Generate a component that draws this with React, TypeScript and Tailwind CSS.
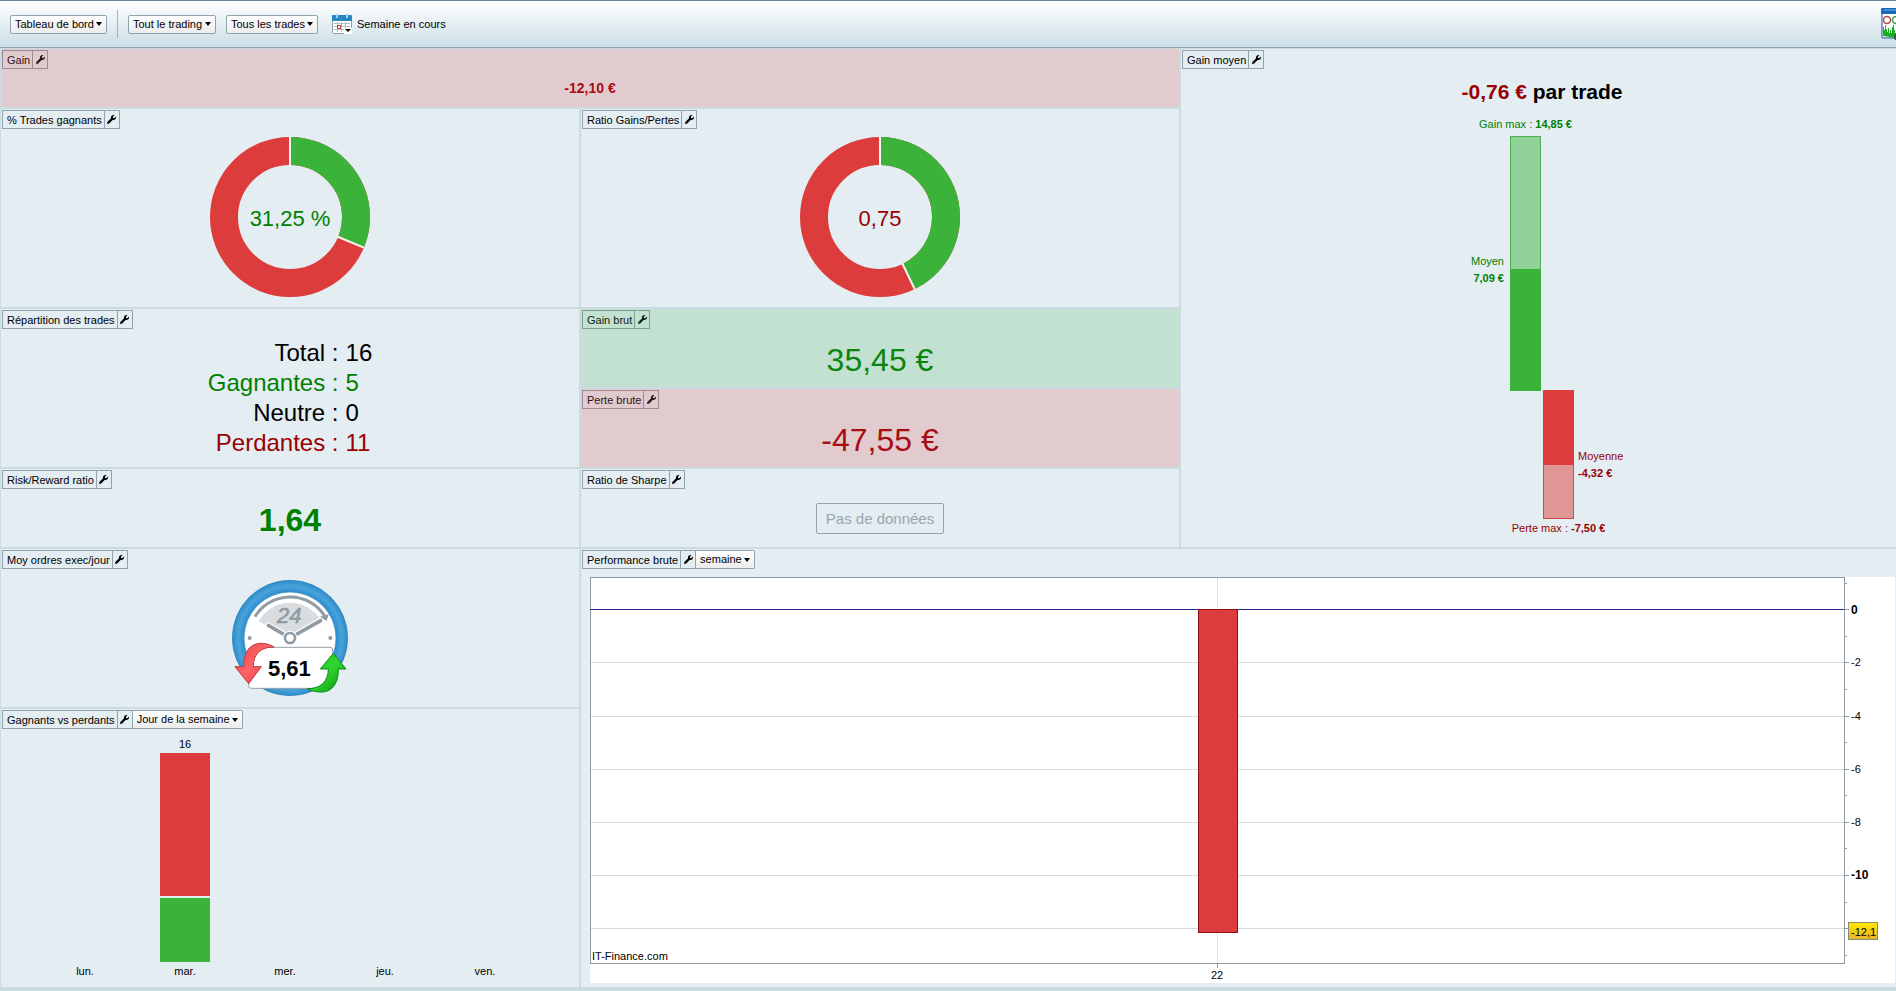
import React, { useState } from 'react';
import { FaWrench } from 'react-icons/fa';

type Tone = 'plain' | 'gain' | 'loss';

const panelTones: Record<Tone, string> = {
  plain: 'bg-[#e3edf2]',
  gain: 'bg-[#c3e1d1]',
  loss: 'bg-[#e1cbce]',
};

const tagTones: Record<Tone, string> = {
  plain: 'border-[#8fa3ad] text-black',
  gain: 'border-[#7f9f90] text-[#0c2414]',
  loss: 'border-[#9c8b92] text-[#2c1418]',
};

const Caret = ({ className = '' }: { className?: string }) => (
  <svg viewBox="0 0 6 4" width="6" height="4" className={className} aria-hidden="true">
    <path d="M0 0h6L3 4z" fill="#000" />
  </svg>
);

const Dropdown = ({ label, options, attached = false }: { label: string; options: string[]; attached?: boolean }) => {
  const [value, setValue] = useState(options[0]);

  return (
    <div
      className={`relative flex h-[19px] items-center border border-[#8fa3ad] bg-gradient-to-b from-white to-[#ececec] ${
        attached ? 'rounded-r-[2px] border-l-0' : 'rounded-[2px]'
      }`}
    >
      <select
        aria-label={label}
        value={value}
        onChange={(e) => setValue(e.target.value)}
        className="h-full appearance-none bg-transparent pl-1 pr-3 text-[11px] leading-[17px] text-black outline-none"
      >
        {options.map((option) => (
          <option key={option}>{option}</option>
        ))}
      </select>
      <Caret className="pointer-events-none absolute right-1" />
    </div>
  );
};

interface PanelProps {
  title: string;
  tone?: Tone;
  className?: string;
  extra?: React.ReactNode;
  children: React.ReactNode;
}

const Panel = ({ title, tone = 'plain', className = '', extra, children }: PanelProps) => (
  <section className={`flex min-w-0 flex-col ${panelTones[tone]} ${className}`}>
    <div className="flex pl-px pt-px">
      <div className={`flex h-[19px] border ${tagTones[tone]}`}>
        <h2 className="whitespace-nowrap pl-1 pr-0.5 text-[11px] leading-[18px]">{title}</h2>
        <button
          type="button"
          aria-label={`Configurer ${title}`}
          className={`flex w-[15px] items-center justify-center border-l ${tagTones[tone]}`}
        >
          <FaWrench className="h-[9px] w-[9px]" />
        </button>
      </div>
      {extra}
    </div>
    <div className="flex flex-1 flex-col justify-center">{children}</div>
  </section>
);

const Figure = ({ className, children }: { className: string; children: React.ReactNode }) => (
  <p className={`pt-[3px] text-center text-[32px] leading-[36px] ${className}`}>{children}</p>
);

const Donut = ({ share, label, color }: { share: number; label: string; color: string }) => {
  const circumference = 2 * Math.PI * 66;
  const angle = share * 360;

  return (
    <svg viewBox="0 0 160 160" className="mx-auto mb-0.5 h-40 w-40" role="img" aria-label={label}>
      <circle cx="80" cy="80" r="66" fill="none" stroke="#dd3c3c" strokeWidth="28" />
      <circle
        cx="80"
        cy="80"
        r="66"
        fill="none"
        stroke="#3bb33b"
        strokeWidth="28"
        strokeDasharray={`${circumference * share} ${circumference}`}
        transform="rotate(-90 80 80)"
      />
      <path d="M80 29V0" stroke="#f7f5f2" strokeWidth="2" />
      <path d="M80 29V0" stroke="#f7f5f2" strokeWidth="2" transform={`rotate(${angle} 80 80)`} />
      <text x="80" y="89" textAnchor="middle" fontSize="22" fill={color}>
        {label}
      </text>
    </svg>
  );
};

const CalendarIcon = () => (
  <svg viewBox="0 0 20 20" width="20" height="20" aria-hidden="true">
    <rect x="0.500" y="3.500" width="19" height="16" rx="1" fill="#fff" stroke="#8fa0aa" />
    <rect x="0" y="1" width="20" height="6" rx="1" fill="#2787c2" />
    <path d="M5 0v4M15 0v4" stroke="#a9d2ea" strokeWidth="2" />
    <path d="M2 9.500h16M2 12.500h16M2 15.500h16M5.500 8v10M9.500 8v10M13.500 8v6" stroke="#a5c4c6" fill="none" />
    <rect x="5.500" y="11.500" width="3" height="3" fill="#fff" stroke="#e0403a" />
    <path d="M12 14h8v6h-8z" fill="#fff" />
    <path d="M13 15h6l-3 3z" fill="#000" />
  </svg>
);

const ReportIcon = () => (
  <svg viewBox="0 0 32 32" width="32" height="32" aria-hidden="true">
    <rect x="1" y="1" width="30" height="29" rx="1" fill="#fff" stroke="#1b4a94" strokeWidth="1" />
    <path d="M1 0h30v6H0V1z" fill="#1c67b8" />
    <path d="M4 1h26v2H2z" fill="#3d8fd6" />
    <circle cx="6" cy="12" r="3.500" fill="none" stroke="#b0484a" strokeWidth="1.500" />
    <circle cx="15" cy="12" r="3.500" fill="none" stroke="#3e9d46" strokeWidth="1.500" />
    <path d="M2 28V19h1v3h1v-5h1v4h1v3h1v-4h1v5h1v-3h1v3h1v-6h1v-2h1v5h1v3h1v5z" fill="#16b21c" />
    <circle cx="17" cy="29" r="3" fill="#fff" stroke="#47505a" strokeWidth="2" />
  </svg>
);

const OrdersClock = ({ value }: { value: string }) => (
  <svg viewBox="90 51 360 360" className="mx-auto h-[120px] w-[120px]" role="img" aria-label={`${value} ordres par jour`}>
    <defs>
      <radialGradient id="ring" cx="0.5" cy="0.5" r="0.5">
        <stop offset="0.8" stopColor="#2c8fd0" />
        <stop offset="0.9" stopColor="#4aa3da" />
        <stop offset="1" stopColor="#2b8cc9" />
      </radialGradient>
      <linearGradient id="redArrow" x1="0" y1="0" x2="1" y2="1">
        <stop offset="0" stopColor="#e8484c" />
        <stop offset="0.5" stopColor="#ff6367" />
        <stop offset="1" stopColor="#e0363a" />
      </linearGradient>
      <linearGradient id="greenArrow" x1="0" y1="0" x2="1" y2="1">
        <stop offset="0" stopColor="#1fc41f" />
        <stop offset="0.5" stopColor="#2fd62f" />
        <stop offset="1" stopColor="#068a10" />
      </linearGradient>
    </defs>
    <circle cx="270" cy="231" r="173" fill="url(#ring)" stroke="#2f7fb5" strokeWidth="2" />
    <circle cx="270" cy="231" r="138" fill="#fff" stroke="#3585ba" strokeWidth="2" />
    <path d="M270 231L176 181A107 107 0 0 1 364 181z" fill="#d9dddf" />
    <path d="M165 167A123 123 0 0 1 374 165" fill="none" stroke="#8f9ca4" strokeWidth="9" />
    <path d="M358 168l28-9-6 21z" fill="#8f9ca4" />
    <text
      x="268"
      y="187"
      textAnchor="middle"
      fontSize="66"
      fontStyle="italic"
      fill="#909ca4"
      stroke="#909ca4"
      strokeWidth="2"
    >
      24
    </text>
    <g strokeLinecap="round" fill="none">
      <path d="M205 193l65 38 92-52" stroke="#fff" strokeWidth="18" />
      <path d="M205 193l65 38 92-52" stroke="#8f9ca4" strokeWidth="11" />
    </g>
    <circle cx="270" cy="231" r="22" fill="#fff" />
    <circle cx="270" cy="231" r="15" fill="#fff" stroke="#8f9ca4" strokeWidth="8" />
    <circle cx="149" cy="231" r="6" fill="#8f9ca4" />
    <circle cx="391" cy="231" r="6" fill="#8f9ca4" />
    <rect x="146" y="259" width="252" height="123" rx="8" fill="#fff" stroke="#98a0a5" strokeWidth="3" />
    <text x="268" y="346" textAnchor="middle" fontSize="66" fontWeight="700" fill="#000">
      {value}
    </text>
    <path
      d="M222 258C190 238 131 238 131 317H105L146 368 184 317H160C160 280 180 258 222 258z"
      fill="url(#redArrow)"
      stroke="#b93a3e"
      strokeWidth="3"
    />
    <path
      d="M322 383C355 400 415 405 415 324H438L400 277 361 324H385C385 362 360 384 322 383z"
      fill="url(#greenArrow)"
      stroke="#0a8a18"
      strokeWidth="3"
    />
  </svg>
);

const breakdown = [
  { label: 'Total', value: 16, color: 'text-black' },
  { label: 'Gagnantes', value: 5, color: 'text-[#008000]' },
  { label: 'Neutre', value: 0, color: 'text-black' },
  { label: 'Perdantes', value: 11, color: 'text-[#990000]' },
];

const days = [
  { name: 'lun.', wins: 0, losses: 0 },
  { name: 'mar.', wins: 5, losses: 11 },
  { name: 'mer.', wins: 0, losses: 0 },
  { name: 'jeu.', wins: 0, losses: 0 },
  { name: 'ven.', wins: 0, losses: 0 },
];

const DayBars = () => (
  <div className="ml-[34px] mr-[44px] grid flex-1 grid-cols-5 pb-2 text-center text-[11px] leading-4">
    {days.map((day) => (
      <div key={day.name} className="flex flex-col items-center justify-end">
        {day.wins + day.losses > 0 && (
          <>
            <span>{day.wins + day.losses}</span>
            <div className="mt-px w-[50px] bg-[#dd3c3c]" style={{ height: day.losses * 13 }} />
            <div className="mt-0.5 w-[50px] bg-[#3bb33b]" style={{ height: day.wins * 13 - 1 }} />
          </>
        )}
        <span className="mt-px">{day.name}</span>
      </div>
    ))}
  </div>
);

const AverageGain = () => (
  <div className="flex flex-1 flex-col pl-[7px] text-[11px] leading-[17px]">
    <p className="pt-[10px] text-center text-[21px] font-bold leading-[26px]">
      <span className="text-[#990000]">-0,76 €</span> par trade
    </p>
    <div className="mt-[11px] flex justify-center gap-[2px] pr-0.5">
      <div className="flex-1 pr-1 pt-[137px] text-right text-[#008000]">
        Moyen
        <br />
        <b>7,09 €</b>
      </div>
      <div className="flex w-[31px] flex-col">
        <p className="mb-[3px] flex justify-center whitespace-pre text-[#008000]">
          Gain max : <b>14,85 €</b>
        </p>
        <div className="h-[133px] border border-b-0 border-[#4fae54] bg-[#90d197]" />
        <div className="h-[122px] bg-[#3bb33b]" />
      </div>
      <div className="flex w-[31px] flex-col pt-[274px]">
        <div className="h-[75px] bg-[#dd3c3c]" />
        <div className="h-[54px] border border-t-0 border-[#cf4a50] bg-[#e19696]" />
        <p className="mt-px flex justify-center whitespace-pre text-[#990000]">
          Perte max : <b>-7,50 €</b>
        </p>
      </div>
      <div className="flex-1 pl-0.5 pt-[332px] text-[#990000]">
        Moyenne
        <br />
        <b>-4,32 €</b>
      </div>
    </div>
  </div>
);

const gridLines = [
  { y: 85, label: '-2' },
  { y: 139, label: '-4' },
  { y: 192, label: '-6' },
  { y: 245, label: '-8' },
  { y: 298, label: '-10' },
  { y: 351, label: '' },
];

const minorTicks = [6, 59, 112, 165, 218, 271, 325, 378];

const PerformanceChart = () => (
  <div className="mb-1 ml-[9px] mr-px mt-2 flex flex-1 bg-white">
    <svg
      className="h-[406px] min-w-0 flex-1"
      shapeRendering="crispEdges"
      role="img"
      aria-label="Performance brute par semaine"
    >
      <svg x="50%" width="1" height="406" overflow="visible">
        <rect x="0" y="0" width="1" height="391" fill="#dcdfe1" />
      </svg>
      {gridLines.map((line) => (
        <rect key={line.y} x="0" y={line.y} width="100%" height="1" fill="#d9dcdf" />
      ))}
      <rect x="0" y="0" width="100%" height="1" fill="#8e9ba4" />
      <rect x="0" y="386" width="100%" height="1" fill="#8e9ba4" />
      <rect x="0" y="0" width="1" height="387" fill="#8e9ba4" />
      <rect x="0" y="32" width="100%" height="1" fill="#26268c" />
      <svg x="50%" width="1" height="406" overflow="visible">
        <rect x="-19" y="32" width="40" height="324" fill="#8c1218" />
        <rect x="-18" y="33" width="38" height="322" fill="#dd3c3c" />
        <rect x="0" y="387" width="1" height="4" fill="#8e9ba4" />
        <text x="0" y="402" textAnchor="middle" fontSize="11">22</text>
      </svg>
      <text x="2" y="383" fontSize="11">IT-Finance.com</text>
    </svg>
    <svg width="51" height="406" fontSize="11" shapeRendering="crispEdges" aria-hidden="true">
      <rect x="0" y="0" width="1" height="387" fill="#8e9ba4" />
      {minorTicks.map((y) => (
        <rect key={y} x="1" y={y} width="2" height="1" fill="#8e9ba4" />
      ))}
      <rect x="0" y="32" width="5" height="1" fill="#8e9ba4" />
      <text x="7" y="37" fontSize="12" fontWeight="700">0</text>
      {gridLines.map((line) => (
        <g key={line.y}>
          <rect x="0" y={line.y} width="5" height="1" fill="#8e9ba4" />
          <text
            x="7"
            y={line.y + 4}
            fontSize={line.label === '-10' ? 12 : 11}
            fontWeight={line.label === '-10' ? 700 : 400}
          >
            {line.label}
          </text>
        </g>
      ))}
      <defs>
        <linearGradient id="priceTag" x1="0" y1="0" x2="0" y2="1">
          <stop offset="0" stopColor="#ffe600" />
          <stop offset="1" stopColor="#e6b72a" />
        </linearGradient>
      </defs>
      <rect x="4" y="345" width="30" height="18" fill="#8b8a78" />
      <rect x="5" y="346" width="28" height="16" fill="url(#priceTag)" />
      <text x="7" y="359">-12,1</text>
    </svg>
  </div>
);

const App = () => {
  return (
    <div className="flex min-h-screen flex-col bg-[#c9dbe3] font-['Liberation_Sans',Arial,sans-serif] text-black">
      {/* Toolbar */}
      <header className="flex h-12 shrink-0 items-center overflow-hidden border-b border-t border-b-[#8fa5b0] border-t-[#6f8293] bg-gradient-to-b from-white to-[#cbdfe6] pl-[10px]">
        <Dropdown label="Vue" options={['Tableau de bord']} />
        <div className="mx-[10px] h-7 w-px bg-[#9fb2bb]" />
        <div className="flex gap-[10px]">
          <Dropdown label="Type de trading" options={['Tout le trading']} />
          <Dropdown label="Filtre des trades" options={['Tous les trades']} />
        </div>
        <button type="button" className="ml-[14px] flex items-center gap-[5px] text-[11px]">
          <CalendarIcon />
          Semaine en cours
        </button>
        <button type="button" aria-label="Rapport" className="-mr-[17px] ml-auto">
          <ReportIcon />
        </button>
      </header>

      {/* Widgets */}
      <main className="mb-1 grid flex-1 grid-cols-[578fr_598fr_715fr] grid-rows-[58fr_198fr_78fr_78fr_78fr_158fr_278fr] gap-[2px] bg-[#ccdae2] pl-px pt-px">
        <Panel title="Gain" tone="loss" className="col-span-2">
          <p className="text-center text-sm font-bold leading-4 text-[#a80d12]">-12,10 €</p>
        </Panel>
        <Panel title="Gain moyen" className="row-span-5">
          <AverageGain />
        </Panel>
        <Panel title="% Trades gagnants">
          <Donut share={0.3125} label="31,25 %" color="#008000" />
        </Panel>
        <Panel title="Ratio Gains/Pertes">
          <Donut share={0.4286} label="0,75" color="#990000" />
        </Panel>
        <Panel title="Répartition des trades" className="row-span-2">
          <dl className="mx-auto grid grid-cols-[auto_auto] gap-x-[7px] text-2xl leading-[30px]">
            {breakdown.map((row) => (
              <React.Fragment key={row.label}>
                <dt className={`text-right ${row.color}`}>{row.label} :</dt>
                <dd className={row.color}>{row.value}</dd>
              </React.Fragment>
            ))}
          </dl>
        </Panel>
        <Panel title="Gain brut" tone="gain">
          <Figure className="text-[#0c850f]">35,45 €</Figure>
        </Panel>
        <Panel title="Perte brute" tone="loss">
          <Figure className="text-[#a80d12]">-47,55 €</Figure>
        </Panel>
        <Panel title="Risk/Reward ratio">
          <Figure className="font-bold text-[#008000]">1,64</Figure>
        </Panel>
        <Panel title="Ratio de Sharpe">
          <p className="mx-auto rounded-[2px] border border-[#94a3ac] px-[9px] text-[15px] leading-[29px] text-[#99a5ad]">
            Pas de données
          </p>
        </Panel>
        <Panel title="Moy ordres exec/jour">
          <OrdersClock value="5,61" />
        </Panel>
        <Panel
          title="Performance brute"
          className="col-span-2 row-span-2"
          extra={<Dropdown attached label="Période" options={['semaine']} />}
        >
          <PerformanceChart />
        </Panel>
        <Panel
          title="Gagnants vs perdants"
          extra={<Dropdown attached label="Regroupement" options={['Jour de la semaine']} />}
        >
          <DayBars />
        </Panel>
      </main>
    </div>
  );
};

export default App;
